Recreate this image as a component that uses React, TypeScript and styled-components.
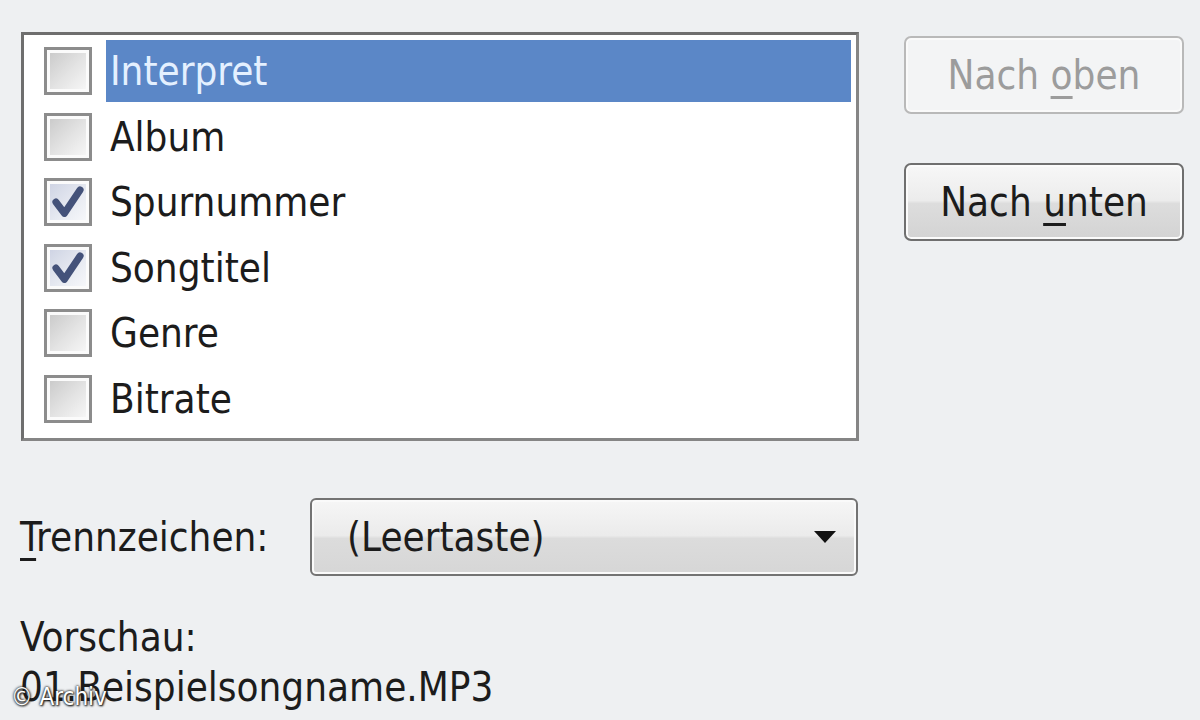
import React from 'react';
import styled, { createGlobalStyle } from 'styled-components';

const GlobalStyle = createGlobalStyle`
  html, body {
    margin: 0;
    padding: 0;
    background: #eef0f2;
  }
  body {
    font-family: 'DejaVu Sans Condensed', 'DejaVu Sans', Tahoma, sans-serif;
    color: #1c1c1c;
  }
`;

type Item = { label: string; checked: boolean };

const items: Item[] = [
  { label: 'Interpret', checked: false },
  { label: 'Album', checked: false },
  { label: 'Spurnummer', checked: true },
  { label: 'Songtitel', checked: true },
  { label: 'Genre', checked: false },
  { label: 'Bitrate', checked: false },
];

const CheckMark = () => (
  <svg width="34" height="34" viewBox="0 0 24 24">
    <path
      d="M3.5 12 L9.5 20 L20.5 3.5"
      fill="none"
      stroke="#44527a"
      strokeWidth="5"
      strokeLinecap="round"
      strokeLinejoin="round"
    />
  </svg>
);

const App = () => {
  return (
    <Page>
      <GlobalStyle />
      <TopSection>
        <ListBox>
          {items.map((item, i) => (
            <Row key={item.label}>
              <CheckBox>
                <CheckInner checked={item.checked}>
                  {item.checked && <CheckMark />}
                </CheckInner>
              </CheckBox>
              <Label selected={i === 0}>{item.label}</Label>
            </Row>
          ))}
        </ListBox>
        <ButtonColumn>
          <Button disabled>
            Nach <AccessKey>o</AccessKey>ben
          </Button>
          <Button>
            Nach <AccessKey>u</AccessKey>nten
          </Button>
        </ButtonColumn>
      </TopSection>

      <SeparatorRow>
        <FieldLabel>
          <AccessKey>T</AccessKey>rennzeichen:
        </FieldLabel>
        <ComboBox>
          <ComboText>(Leertaste)</ComboText>
          <Arrow />
        </ComboBox>
      </SeparatorRow>

      <Preview>
        <PreviewLine>Vorschau:</PreviewLine>
        <PreviewLine>01.Beispielsongname.MP3</PreviewLine>
      </Preview>

      <Watermark>© Archiv</Watermark>
    </Page>
  );
};

export default App;

const Page = styled.div`
  position: relative;
  width: 1200px;
  height: 720px;
  box-sizing: border-box;
  padding: 32px 0 0 21px;
  overflow: hidden;
  font-size: 40px;
`;

const TopSection = styled.div`
  display: flex;
  align-items: flex-start;
  gap: 45px;
`;

const ListBox = styled.div`
  width: 838px;
  height: 409px;
  box-sizing: border-box;
  border: 3px solid #6e6e6e;
  border-right-color: #858585;
  border-bottom-color: #858585;
  background: #ffffff;
  padding: 5px 5px 0 20px;
  display: flex;
  flex-direction: column;
`;

const Row = styled.div`
  height: 65.5px;
  display: flex;
  align-items: flex-start;
  gap: 14px;
`;

const CheckBox = styled.div`
  width: 48px;
  height: 48px;
  margin-top: 7px;
  box-sizing: border-box;
  border: 3px solid #8c8c8c;
  background: #fbfbfb;
  padding: 3px;
  flex-shrink: 0;
`;

const CheckInner = styled.div<{ checked: boolean }>`
  width: 100%;
  height: 100%;
  display: flex;
  align-items: center;
  justify-content: center;
  background: ${(p) =>
    p.checked
      ? 'linear-gradient(135deg, #cfd4e4 0%, #e8ebf2 60%, #f6f7fa 100%)'
      : 'linear-gradient(135deg, #cbcbcb 0%, #e4e4e4 55%, #f6f6f6 100%)'};
`;

const Label = styled.div<{ selected: boolean }>`
  flex: 1;
  height: 62px;
  line-height: 62px;
  padding-left: 4px;
  white-space: nowrap;
  background: ${(p) => (p.selected ? '#5b87c7' : 'transparent')};
  color: ${(p) => (p.selected ? '#e4f0ff' : '#1c1c1c')};
`;

const ButtonColumn = styled.div`
  display: flex;
  flex-direction: column;
  gap: 49px;
  margin-top: 4px;
`;

const Button = styled.button`
  width: 280px;
  height: 78px;
  box-sizing: border-box;
  border-radius: 7px;
  font-family: inherit;
  font-size: 40px;
  padding: 0;
  cursor: pointer;
  border: 2px solid #6f6f6f;
  color: #1c1c1c;
  background: linear-gradient(
    to bottom,
    #f7f7f7 0%,
    #ececec 48%,
    #dddddd 52%,
    #d3d3d3 100%
  );
  box-shadow: inset 0 0 0 2px #fbfbfb;

  &:disabled {
    cursor: default;
    border-color: #b9b9b9;
    color: #9c9c9c;
    background: #f3f4f5;
    box-shadow: inset 0 0 0 2px #fafafa;
  }
`;

const AccessKey = styled.span`
  text-decoration: underline;
  text-decoration-thickness: 3px;
  text-underline-offset: 7px;
`;

const SeparatorRow = styled.div`
  display: flex;
  align-items: center;
  margin-top: 57px;
`;

const FieldLabel = styled.div`
  width: 290px;
  margin-left: -1px;
  white-space: nowrap;
`;

const ComboBox = styled.div`
  width: 548px;
  height: 78px;
  box-sizing: border-box;
  border: 2px solid #737373;
  border-radius: 6px;
  display: flex;
  align-items: center;
  justify-content: space-between;
  padding: 0 20px 0 35px;
  background: linear-gradient(
    to bottom,
    #f6f6f6 0%,
    #ebebeb 48%,
    #dcdcdc 52%,
    #d6d6d6 100%
  );
  box-shadow: inset 0 0 0 2px #fafafa;
`;

const ComboText = styled.span`
  white-space: nowrap;
`;

const Arrow = styled.span`
  width: 0;
  height: 0;
  border-left: 11px solid transparent;
  border-right: 11px solid transparent;
  border-top: 12px solid #111111;
`;

const Preview = styled.div`
  margin-top: 36px;
  margin-left: -1px;
  display: flex;
  flex-direction: column;
`;

const PreviewLine = styled.div`
  line-height: 50px;
  white-space: nowrap;
`;

const Watermark = styled.div`
  position: absolute;
  left: 11px;
  bottom: 9px;
  font-family: 'DejaVu Sans Condensed', 'Liberation Sans', sans-serif;
  font-size: 24px;
  color: #ffffff;
  text-shadow: 0 0 2px #222222, 0 0 3px #333333, 1px 1px 2px #111111;
`;
